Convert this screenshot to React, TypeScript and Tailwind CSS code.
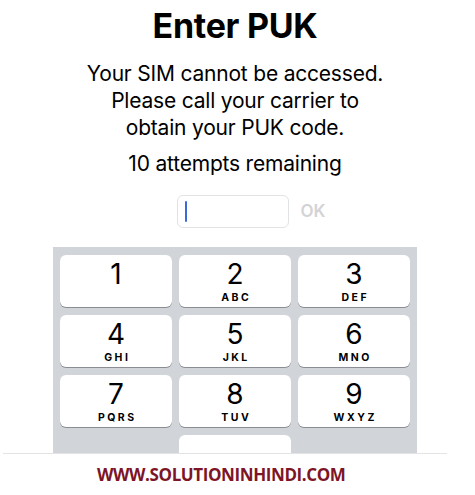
const keys: { digit: string; letters: string }[] = [
  { digit: '1', letters: '' },
  { digit: '2', letters: 'ABC' },
  { digit: '3', letters: 'DEF' },
  { digit: '4', letters: 'GHI' },
  { digit: '5', letters: 'JKL' },
  { digit: '6', letters: 'MNO' },
  { digit: '7', letters: 'PQRS' },
  { digit: '8', letters: 'TUV' },
  { digit: '9', letters: 'WXYZ' },
];

const Key = ({ digit, letters }: { digit: string; letters: string }) => (
  <div className="h-[52px] rounded-[6px] bg-white shadow-[0_1px_0_#8a8d93] flex flex-col items-center">
    <div className="text-[28px] leading-[28px] mt-[5px] text-black">{digit}</div>
    {letters && (
      <div className="text-[10.5px] leading-[12px] font-bold tracking-[2.5px] mt-[4px] pl-[2.5px] text-black">
        {letters}
      </div>
    )}
  </div>
);

export default function App() {
  return (
    <div className="w-[475px] h-[495px] bg-white overflow-hidden font-['Inter','Liberation_Sans',sans-serif] text-black">
      <div className="w-[470px] flex flex-col items-center">
        <h1 className="text-[34px] leading-[40px] font-bold mt-[6px] tracking-[-0.3px]">Enter PUK</h1>
        <p className="text-[21px] leading-[27px] text-center mt-[14px] tracking-[-0.2px]">
          Your SIM cannot be accessed.
          <br />
          Please call your carrier to
          <br />
          obtain your PUK code.
        </p>
        <p className="text-[21px] leading-[27px] mt-[9px] tracking-[-0.2px]">10 attempts remaining</p>

        <div className="flex items-center mt-[18px] ml-[33px]">
          <div className="w-[112px] h-[33px] rounded-[6px] border border-[#e3e3e6] flex items-center pl-[7px]">
            <div className="w-[2px] h-[21px] bg-[#3b6bd8] rounded-full" />
          </div>
          <span className="ml-[11px] text-[17px] font-semibold text-[#d3d3d6]">OK</span>
        </div>

        <div className="w-[364px] h-[206px] bg-[#d1d4d9] mt-[19px] overflow-hidden px-[7px] pt-[8px]">
          <div className="grid grid-cols-3 gap-x-[7px] gap-y-[8px]">
            {keys.map((k) => (
              <Key key={k.digit} digit={k.digit} letters={k.letters} />
            ))}
            <div />
            <div className="h-[52px] rounded-[6px] bg-white" />
            <div />
          </div>
        </div>
      </div>
      <div className="w-[444px] ml-[3px] h-px bg-[#e4e4e6]" />
      <div className="flex mt-[11px] pl-[97px]">
        <span className="font-['Open_Sans',sans-serif] font-bold text-[17px] leading-[20px] text-[#7d1526] tracking-[-0.4px]">
          WWW.SOLUTIONINHINDI.COM
        </span>
      </div>
    </div>
  );
}
